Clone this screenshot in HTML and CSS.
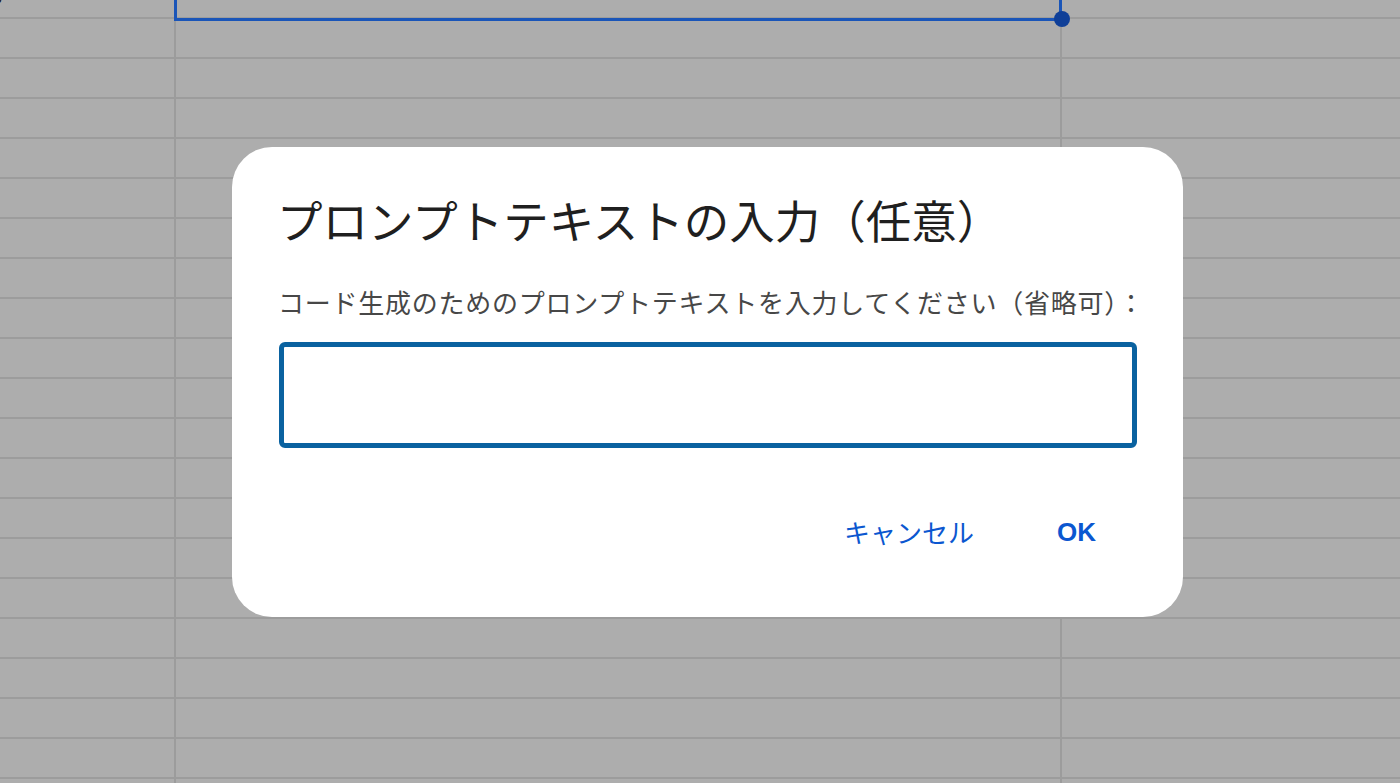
FILE: index.html
```html
<!DOCTYPE html>
<html lang="ja">
<head>
  <meta charset="UTF-8">
  <meta name="viewport" content="width=device-width, initial-scale=1.0">
  <title>プロンプトテキストの入力</title>
  <link rel="stylesheet" href="styles.css">
</head>
<body>
  <div class="sheet">
    <div class="col col-a"><span class="clip">p</span></div>
    <div class="col col-b"></div>
    <div class="col col-c"></div>

    <div class="selection"></div>
    <div class="handle"></div>
  </div>

  <div class="dialog">
    <h1 class="title">プロンプトテキストの入力（任意）</h1>
    <label class="label" for="prompt">コード生成のためのプロンプトテキストを入力してください（省略可）：</label>
    <input class="field" id="prompt" type="text">
    <div class="actions">
      <button class="btn">キャンセル</button>
      <button class="btn btn-ok">OK</button>
    </div>
  </div>
</body>
</html>
```

FILE: styles.css
```css
body {
  margin: 0;
  padding: 0;
  height: 100vh;
  overflow: hidden;
  font-family: "Liberation Sans", "Noto Sans CJK JP", sans-serif;
  background-color: #adadad;
}

.sheet {
  position: relative;
  height: 100%;
  display: grid;
  grid-template-columns: 176px 886px 1fr;
  background-color: #adadad;
  background-image: linear-gradient(#9c9c9c 2px, transparent 2px);
  background-size: 100% 40px;
  background-position: 0 17px;
}

.col {
  border-right: 2px solid #9c9c9c;
}

.col-c {
  border-right: none;
}

.clip {
  display: block;
  margin: -10px 0 0 -6px;
  font-size: 14px;
  color: #111;
}

.selection {
  position: absolute;
  top: -10px;
  left: 174px;
  width: 882px;
  height: 25px;
  border: 3px solid #1a55b8;
}

.handle {
  position: absolute;
  top: 11px;
  left: 1054px;
  width: 16px;
  height: 16px;
  border-radius: 50%;
  background-color: #0f3f98;
}

.dialog {
  position: absolute;
  top: 147px;
  left: 232px;
  width: 951px;
  height: 470px;
  box-sizing: border-box;
  padding: 46px 46px 0 47px;
  background-color: #fff;
  border-radius: 40px;
  display: flex;
  flex-direction: column;
}

.title {
  margin: 0 0 0 -2px;
  font-family: "Noto Sans CJK JP", sans-serif;
  font-weight: 400;
  font-size: 45.5px;
  line-height: 53px;
  color: #1f1f1f;
  white-space: nowrap;
}

.label {
  margin: 38px 0 0 -1px;
  font-family: "Noto Sans CJK JP", sans-serif;
  font-size: 26px;
  letter-spacing: 0.75px;
  line-height: 36px;
  color: #474747;
  white-space: nowrap;
}

.field {
  margin-top: 22px;
  height: 106px;
  box-sizing: border-box;
  border: 5px solid #0a62a0;
  border-radius: 6px;
  outline: none;
  font-size: 24px;
  padding: 0 14px;
}

.actions {
  display: flex;
  justify-content: flex-end;
  gap: 35px;
  margin-top: 60px;
  margin-right: 17px;
}

.btn {
  border: none;
  background: none;
  padding: 6px 24px;
  font-family: "Noto Sans CJK JP", sans-serif;
  font-size: 26px;
  line-height: 36px;
  color: #0b57d0;
  cursor: pointer;
}

.btn-ok {
  font-family: "Liberation Sans", sans-serif;
  font-weight: 700;
  font-size: 26px;
}
```
